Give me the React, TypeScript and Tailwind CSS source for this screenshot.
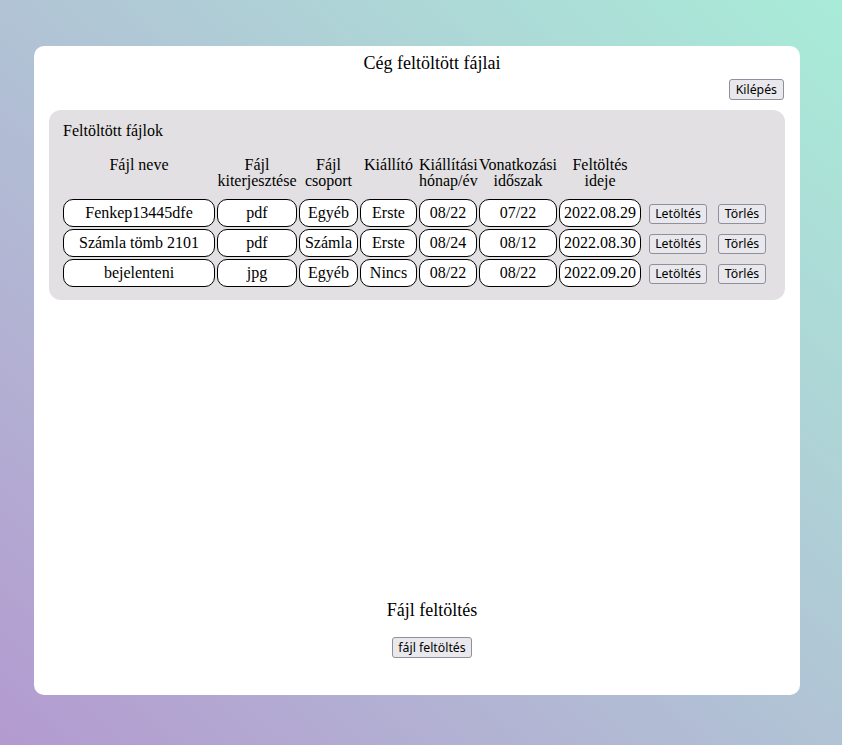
import React from "react";

const rows = [
  ["Fenkep13445dfe", "pdf", "Egyéb", "Erste", "08/22", "07/22", "2022.08.29"],
  ["Számla tömb 2101", "pdf", "Számla", "Erste", "08/24", "08/12", "2022.08.30"],
  ["bejelenteni", "jpg", "Egyéb", "Nincs", "08/22", "08/22", "2022.09.20"],
];

const headers = [
  ["Fájl neve"],
  ["Fájl", "kiterjesztése"],
  ["Fájl", "csoport"],
  ["Kiállító"],
  ["Kiállítási", "hónap/év"],
  ["Vonatkozási", "időszak"],
  ["Feltöltés", "ideje"],
  [],
  [],
];

function Btn({ children, className = "" }: { children: React.ReactNode; className?: string }) {
  return (
    <button
      className={
        "bg-[#e9e9ed] border border-[#8f8f9d] rounded-[3px] text-[12.3px] leading-[16px] text-black px-[5px] py-0 whitespace-nowrap font-['Noto_Sans',sans-serif] " +
        className
      }
    >
      {children}
    </button>
  );
}

export default function App() {
  return (
    <div className="w-[842px] h-[745px] bg-gradient-to-tr from-[#b39ad0] to-[#a8ecd8] pt-[46px] pl-[34px] font-['Liberation_Serif',serif] text-black">
      <div className="w-[766px] h-[649px] bg-white rounded-[10px] flex flex-col px-[15px] pt-[7px]">
        <div className="text-center text-[18px] leading-[21px] pl-[30px]">Cég feltöltött fájlai</div>
        <div className="flex justify-end mt-[5px] pr-[1px]">
          <Btn className="h-[21px] px-[6px]">Kilépés</Btn>
        </div>
        <div className="mt-[10px] bg-[#e2e0e2] rounded-[12px] pl-[14px] pr-[14px] pt-[12px] pb-[13px]">
          <div className="text-[16px] leading-[18px]">Feltöltött fájlok</div>
          <div className="mt-[17px] grid grid-cols-[152px_80px_59px_57px_58px_78px_82px_70px_54px] gap-x-[2px] gap-y-[2px]">
            {headers.map((h, i) => (
              <div key={"h" + i} className="text-center text-[16px] leading-[16px] mb-[8px] self-start whitespace-nowrap">
                {h.map((l, j) => (
                  <div key={j}>{l}</div>
                ))}
              </div>
            ))}
            {rows.map((r, ri) => (
              <React.Fragment key={ri}>
                {r.map((c, ci) => (
                  <div
                    key={ci}
                    className="h-[28px] border border-black rounded-[10px] bg-white flex items-center justify-center text-[16px] whitespace-nowrap"
                  >
                    {c}
                  </div>
                ))}
                <div className="flex items-center justify-center pt-[1px]">
                  <Btn className="h-[20px]">Letöltés</Btn>
                </div>
                <div className="flex items-center justify-center pt-[1px]">
                  <Btn className="h-[20px] px-[6px]">Törlés</Btn>
                </div>
              </React.Fragment>
            ))}
          </div>
        </div>
        <div className="mt-auto pb-[37px] pl-[30px] flex flex-col items-center">
          <div className="text-[18px] leading-[21px]">Fájl feltöltés</div>
          <Btn className="mt-[16px] h-[21px]">fájl feltöltés</Btn>
        </div>
      </div>
    </div>
  );
}
